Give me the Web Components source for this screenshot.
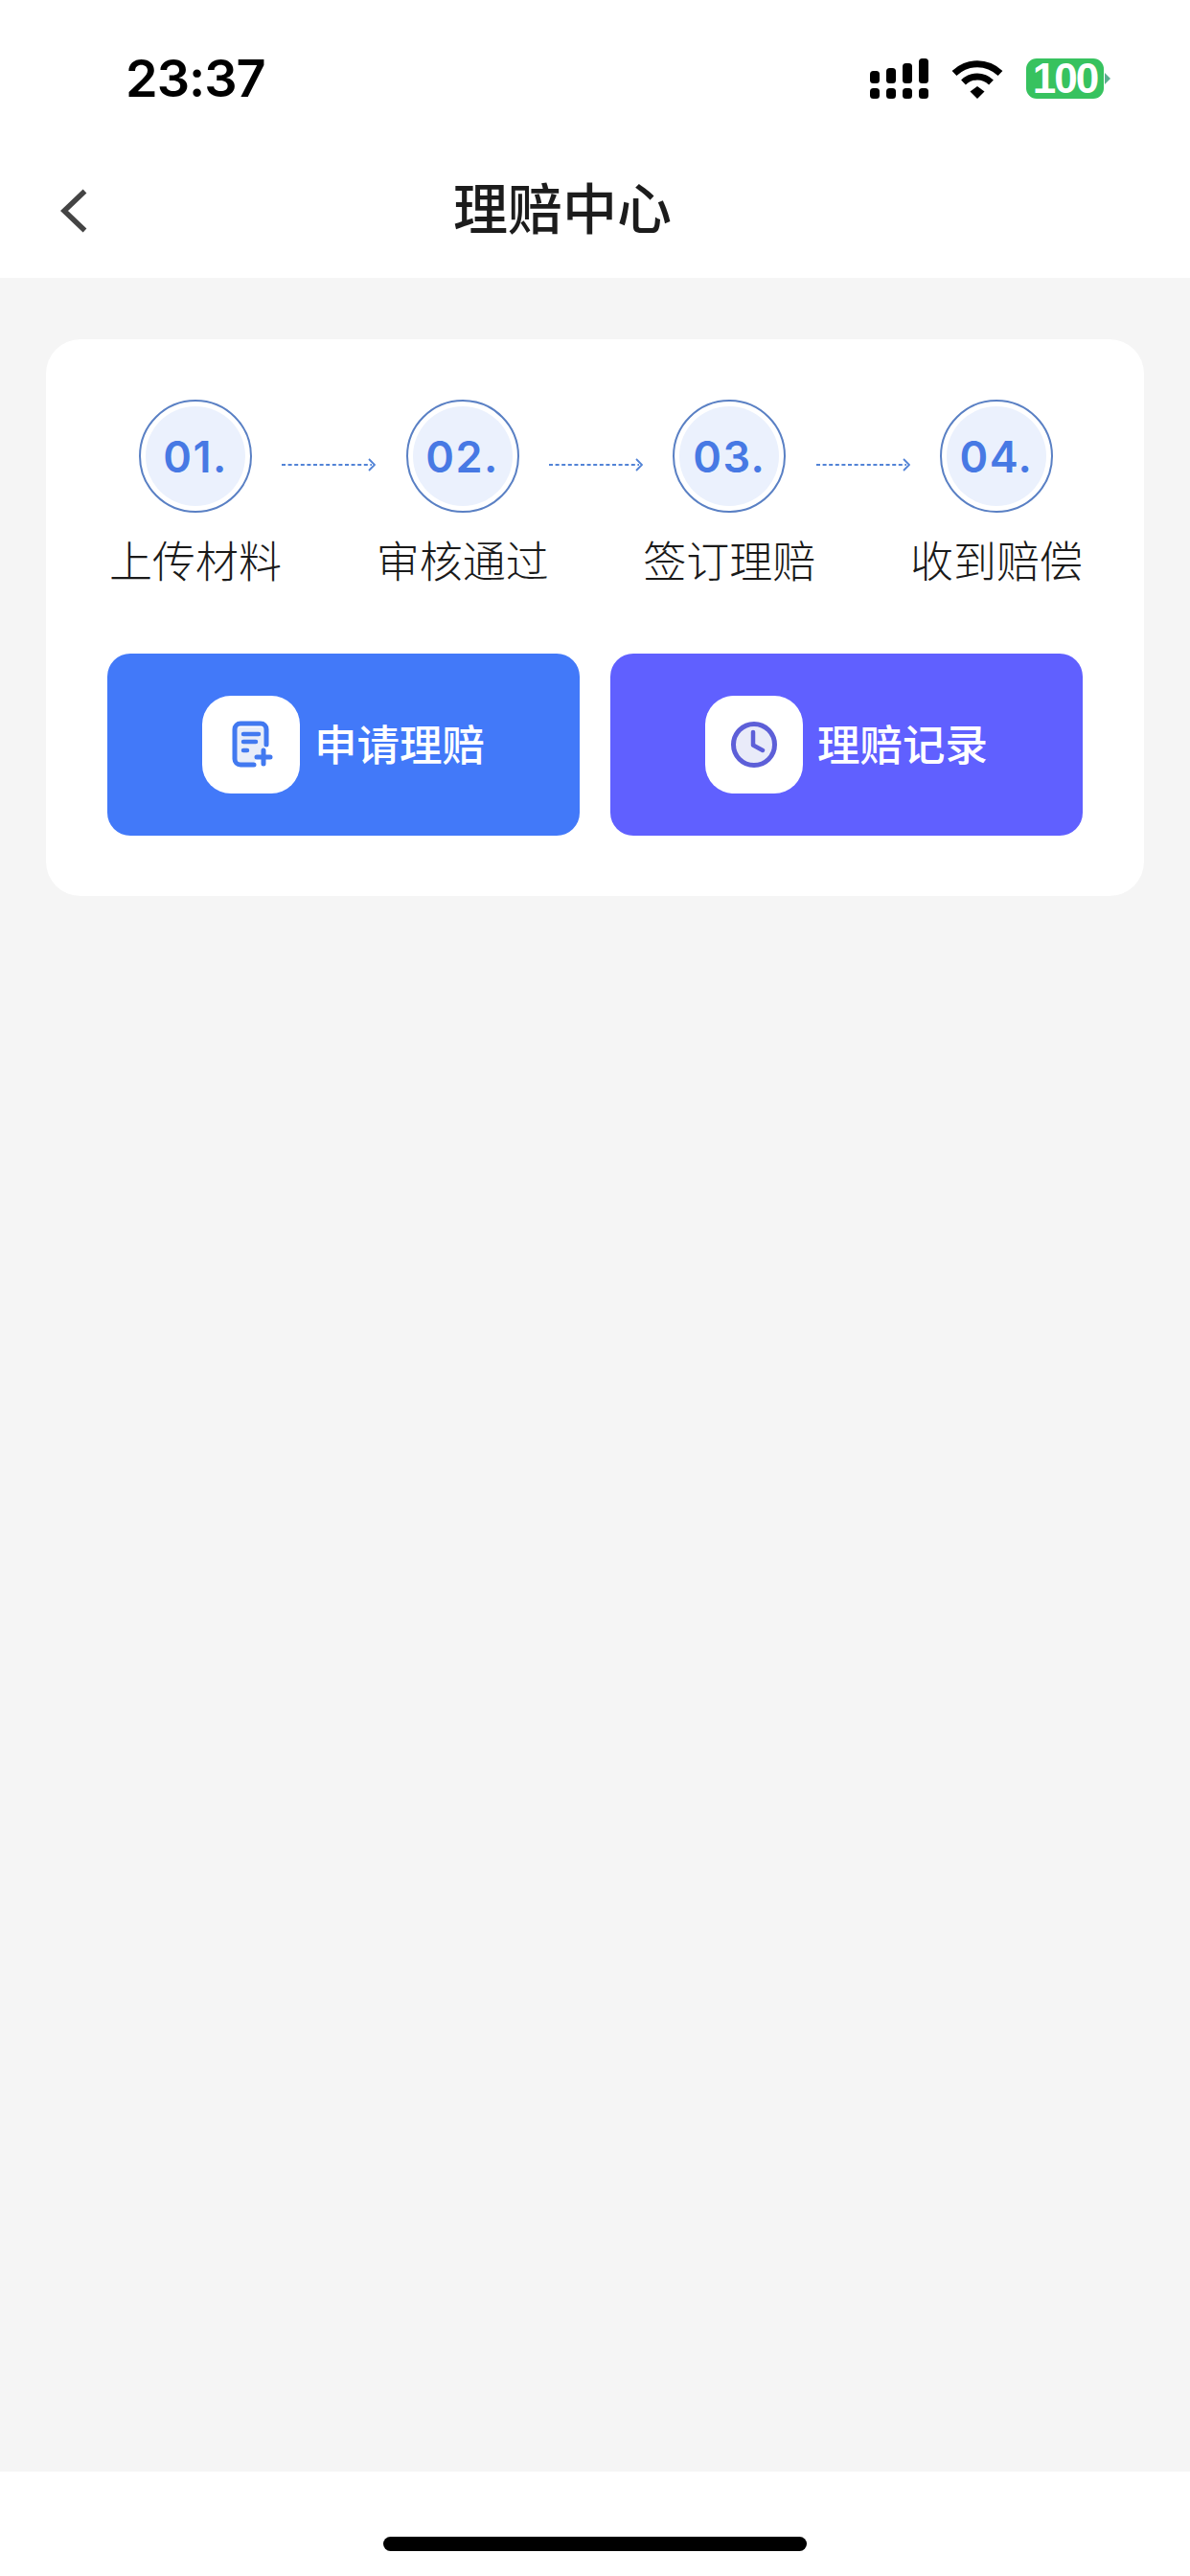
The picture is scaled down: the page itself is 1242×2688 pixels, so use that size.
<!DOCTYPE html>
<html lang="zh">
<head>
<meta charset="utf-8">
<title>理赔中心</title>
<style>
  html, body { margin: 0; padding: 0; }
  body { width: 1242px; height: 2688px; overflow: hidden; background: #f5f5f5; font-family: "Noto Sans CJK SC", "Liberation Sans", sans-serif; }
</style>
</head>
<body>
<claim-page>
  <status-bar slot="top"></status-bar>
  <nav-bar slot="top">理赔中心</nav-bar>
  <claim-card>
    <claim-steps>
      <claim-step num="01.">上传材料</claim-step>
      <step-arrow></step-arrow>
      <claim-step num="02.">审核通过</claim-step>
      <step-arrow></step-arrow>
      <claim-step num="03.">签订理赔</claim-step>
      <step-arrow></step-arrow>
      <claim-step num="04.">收到赔偿</claim-step>
    </claim-steps>
    <action-button kind="apply">申请理赔</action-button>
    <action-button kind="record">理赔记录</action-button>
  </claim-card>
  <home-bar slot="bottom"></home-bar>
</claim-page>

<script>
class ClaimPage extends HTMLElement {
  connectedCallback() {
    this.attachShadow({ mode: 'open' });
    this.shadowRoot.innerHTML = `
      <style>
        :host { display: flex; flex-direction: column; width: 1242px; height: 2688px; background: #f5f5f5; }
        header { background: #fff; height: 290px; display: flex; flex-direction: column; }
        main { flex: 1; padding: 64px 48px 0; }
        footer { background: #fff; height: 109px; }
      </style>
      <header><slot name="top"></slot></header>
      <main><slot></slot></main>
      <footer><slot name="bottom"></slot></footer>
    `;
  }
}

class StatusBar extends HTMLElement {
  connectedCallback() {
    this.attachShadow({ mode: 'open' });
    this.shadowRoot.innerHTML = `
      <style>
        :host { display: flex; align-items: flex-start; height: 150px; padding: 0 83px 0 131px; box-sizing: border-box; }
        .time { font: 600 54px/54px Inter, "Liberation Sans", sans-serif; color: #000; margin-top: 55px; letter-spacing: -1px; }
        .icons { margin-left: auto; display: flex; margin-top: 61px; }
        .signal { display: grid; grid-template-columns: repeat(4, 10px); grid-template-rows: 26px 11px; column-gap: 7px; row-gap: 5px; align-items: end; }
        .signal i { display: block; background: #000; border-radius: 3.5px; }
        .wifi { margin: 2px 0 0 24px; }
        .battery { margin-left: 24px; width: 81px; height: 42px; border-radius: 11px; background: #37c25f; color: #fff; display: flex; align-items: center; justify-content: center; font: 700 44px/42px "Liberation Sans", Arial, sans-serif; letter-spacing: -2px; }
        .nub { margin: 15px 0 0 1px; width: 6px; height: 12px; background: #5bae8e; clip-path: polygon(0 0, 100% 50%, 0 100%); }
      </style>
      <span class="time">23:37</span>
      <div class="icons">
        <div class="signal">
          <i style="height:13px"></i><i style="height:16px"></i><i style="height:21px"></i><i style="height:26px"></i>
          <i style="height:11px"></i><i style="height:11px"></i><i style="height:11px"></i><i style="height:11px"></i>
        </div>
        <svg class="wifi" width="54" height="40" viewBox="0 0 54 40">
          <path d="M3 13.5C17 .5 37 .5 51 13.5" fill="none" stroke="#000" stroke-width="7"/>
          <path d="M12.5 23C21 15 33 15 41.5 23" fill="none" stroke="#000" stroke-width="7"/>
          <path d="M27 27 34.5 32.5 27 40 19.5 32.5Z" fill="#000"/>
        </svg>
        <span class="battery">100</span>
        <span class="nub"></span>
      </div>
    `;
  }
}

class NavBar extends HTMLElement {
  connectedCallback() {
    this.attachShadow({ mode: 'open' });
    this.shadowRoot.innerHTML = `
      <style>
        :host { display: flex; align-items: center; height: 140px; padding: 0 0 1px 63px; box-sizing: border-box; }
        svg { flex: none; display: block; }
        .title { margin: 0 0 11px 382px; font-size: 57px; line-height: 70px; font-weight: 500; color: #1c1c1c; white-space: nowrap; }
      </style>
      <svg width="28" height="46" viewBox="0 0 28 46"><path d="M25.5 2.5 4 23l21.5 20.5" fill="none" stroke="#444" stroke-width="5.5"/></svg>
      <span class="title"><slot></slot></span>
    `;
  }
}

class ClaimCard extends HTMLElement {
  connectedCallback() {
    this.attachShadow({ mode: 'open' });
    this.shadowRoot.innerHTML = `
      <style>
        :host { display: grid; grid-template-columns: 493px 493px; column-gap: 32px; row-gap: 75px; padding: 63px 64px; background: #fff; border-radius: 36px; }
      </style>
      <slot></slot>
    `;
  }
}

class ClaimSteps extends HTMLElement {
  connectedCallback() {
    this.attachShadow({ mode: 'open' });
    this.shadowRoot.innerHTML = `
      <style>
        :host { grid-column: 1 / -1; display: flex; justify-content: space-between; padding: 0 1px 0 3px; }
      </style>
      <slot></slot>
    `;
  }
}

class ClaimStep extends HTMLElement {
  connectedCallback() {
    this.attachShadow({ mode: 'open' });
    this.shadowRoot.innerHTML = `
      <style>
        :host { display: flex; flex-direction: column; align-items: center; width: 178px; }
        .ring { width: 118px; height: 118px; box-sizing: border-box; border: 2px solid #5a80c4; border-radius: 50%; display: flex; align-items: center; justify-content: center; }
        .disc { width: 104px; height: 104px; border-radius: 50%; background: #ebf1fd; display: flex; align-items: center; justify-content: center; font: 600 45px/45px Inter, "Liberation Sans", sans-serif; letter-spacing: 1.5px; color: #4779e4; }
        .label { margin-top: 26px; font-size: 45px; line-height: 46px; color: #1a1a1a; white-space: nowrap; font-weight: 300; }
      </style>
      <div class="ring"><div class="disc">${this.getAttribute('num')}</div></div>
      <div class="label"><slot></slot></div>
    `;
  }
}

class StepArrow extends HTMLElement {
  connectedCallback() {
    this.attachShadow({ mode: 'open' });
    this.shadowRoot.innerHTML = `
      <style>
        :host { display: block; flex: none; width: 98px; height: 14px; margin-top: 61px; }
        svg { display: block; }
      </style>
      <svg width="98" height="14" viewBox="0 0 98 14" fill="none" stroke="#5283d6" stroke-width="2">
        <path d="M0 7H94" stroke-dasharray="4 2.6"/>
        <path d="M91 1l6 6-6 6" stroke-width="1.8"/>
      </svg>
    `;
  }
}

class ActionButton extends HTMLElement {
  connectedCallback() {
    const record = this.getAttribute('kind') === 'record';
    const icon = record
      ? `<circle cx="30" cy="30" r="21.5" fill="#e9ebf9" stroke="#5d5fd8" stroke-width="5"/>
         <path d="M29 17V30.5L39 36" fill="none" stroke="#5d5fd8" stroke-width="4.5" stroke-linecap="round" stroke-linejoin="round"/>`
      : `<path d="M13 12h31v22l-12 16H17a4 4 0 0 1-4-4Z" fill="#e8edf9"/>
         <path d="M46 30V14a6 6 0 0 0-6-6H19a6 6 0 0 0-6 6V45a6 6 0 0 0 6 6H33" fill="none" stroke="#4279f0" stroke-width="5" stroke-linecap="round"/>
         <path d="M22 19H38M22 27H35M22 36H26" fill="none" stroke="#4279f0" stroke-width="4.5" stroke-linecap="round"/>
         <path d="M36 43H50M43 36V50" fill="none" stroke="#4279f0" stroke-width="5" stroke-linecap="round"/>`;
    this.attachShadow({ mode: 'open' });
    this.shadowRoot.innerHTML = `
      <style>
        :host { display: flex; align-items: center; justify-content: center; gap: 15px; height: 190px; border-radius: 24px; background: ${record ? '#6060ff' : '#4279f9'}; color: #fff; }
        .tile { width: 102px; height: 102px; border-radius: 30px; background: #fff; display: flex; align-items: center; justify-content: center; }
        .text { margin-bottom: 5px; font-size: 44.5px; line-height: 50px; font-weight: 500; white-space: nowrap; }
      </style>
      <span class="tile"><svg width="60" height="60" viewBox="0 0 60 60">${icon}</svg></span>
      <span class="text"><slot></slot></span>
    `;
  }
}

class HomeBar extends HTMLElement {
  connectedCallback() {
    this.attachShadow({ mode: 'open' });
    this.shadowRoot.innerHTML = `
      <style>
        :host { display: flex; justify-content: center; padding-top: 68px; }
        i { display: block; width: 442px; height: 15px; border-radius: 8px; background: #000; }
      </style>
      <i></i>
    `;
  }
}

customElements.define('claim-page', ClaimPage);
customElements.define('status-bar', StatusBar);
customElements.define('nav-bar', NavBar);
customElements.define('claim-card', ClaimCard);
customElements.define('claim-steps', ClaimSteps);
customElements.define('claim-step', ClaimStep);
customElements.define('step-arrow', StepArrow);
customElements.define('action-button', ActionButton);
customElements.define('home-bar', HomeBar);
</script>
</body>
</html>
